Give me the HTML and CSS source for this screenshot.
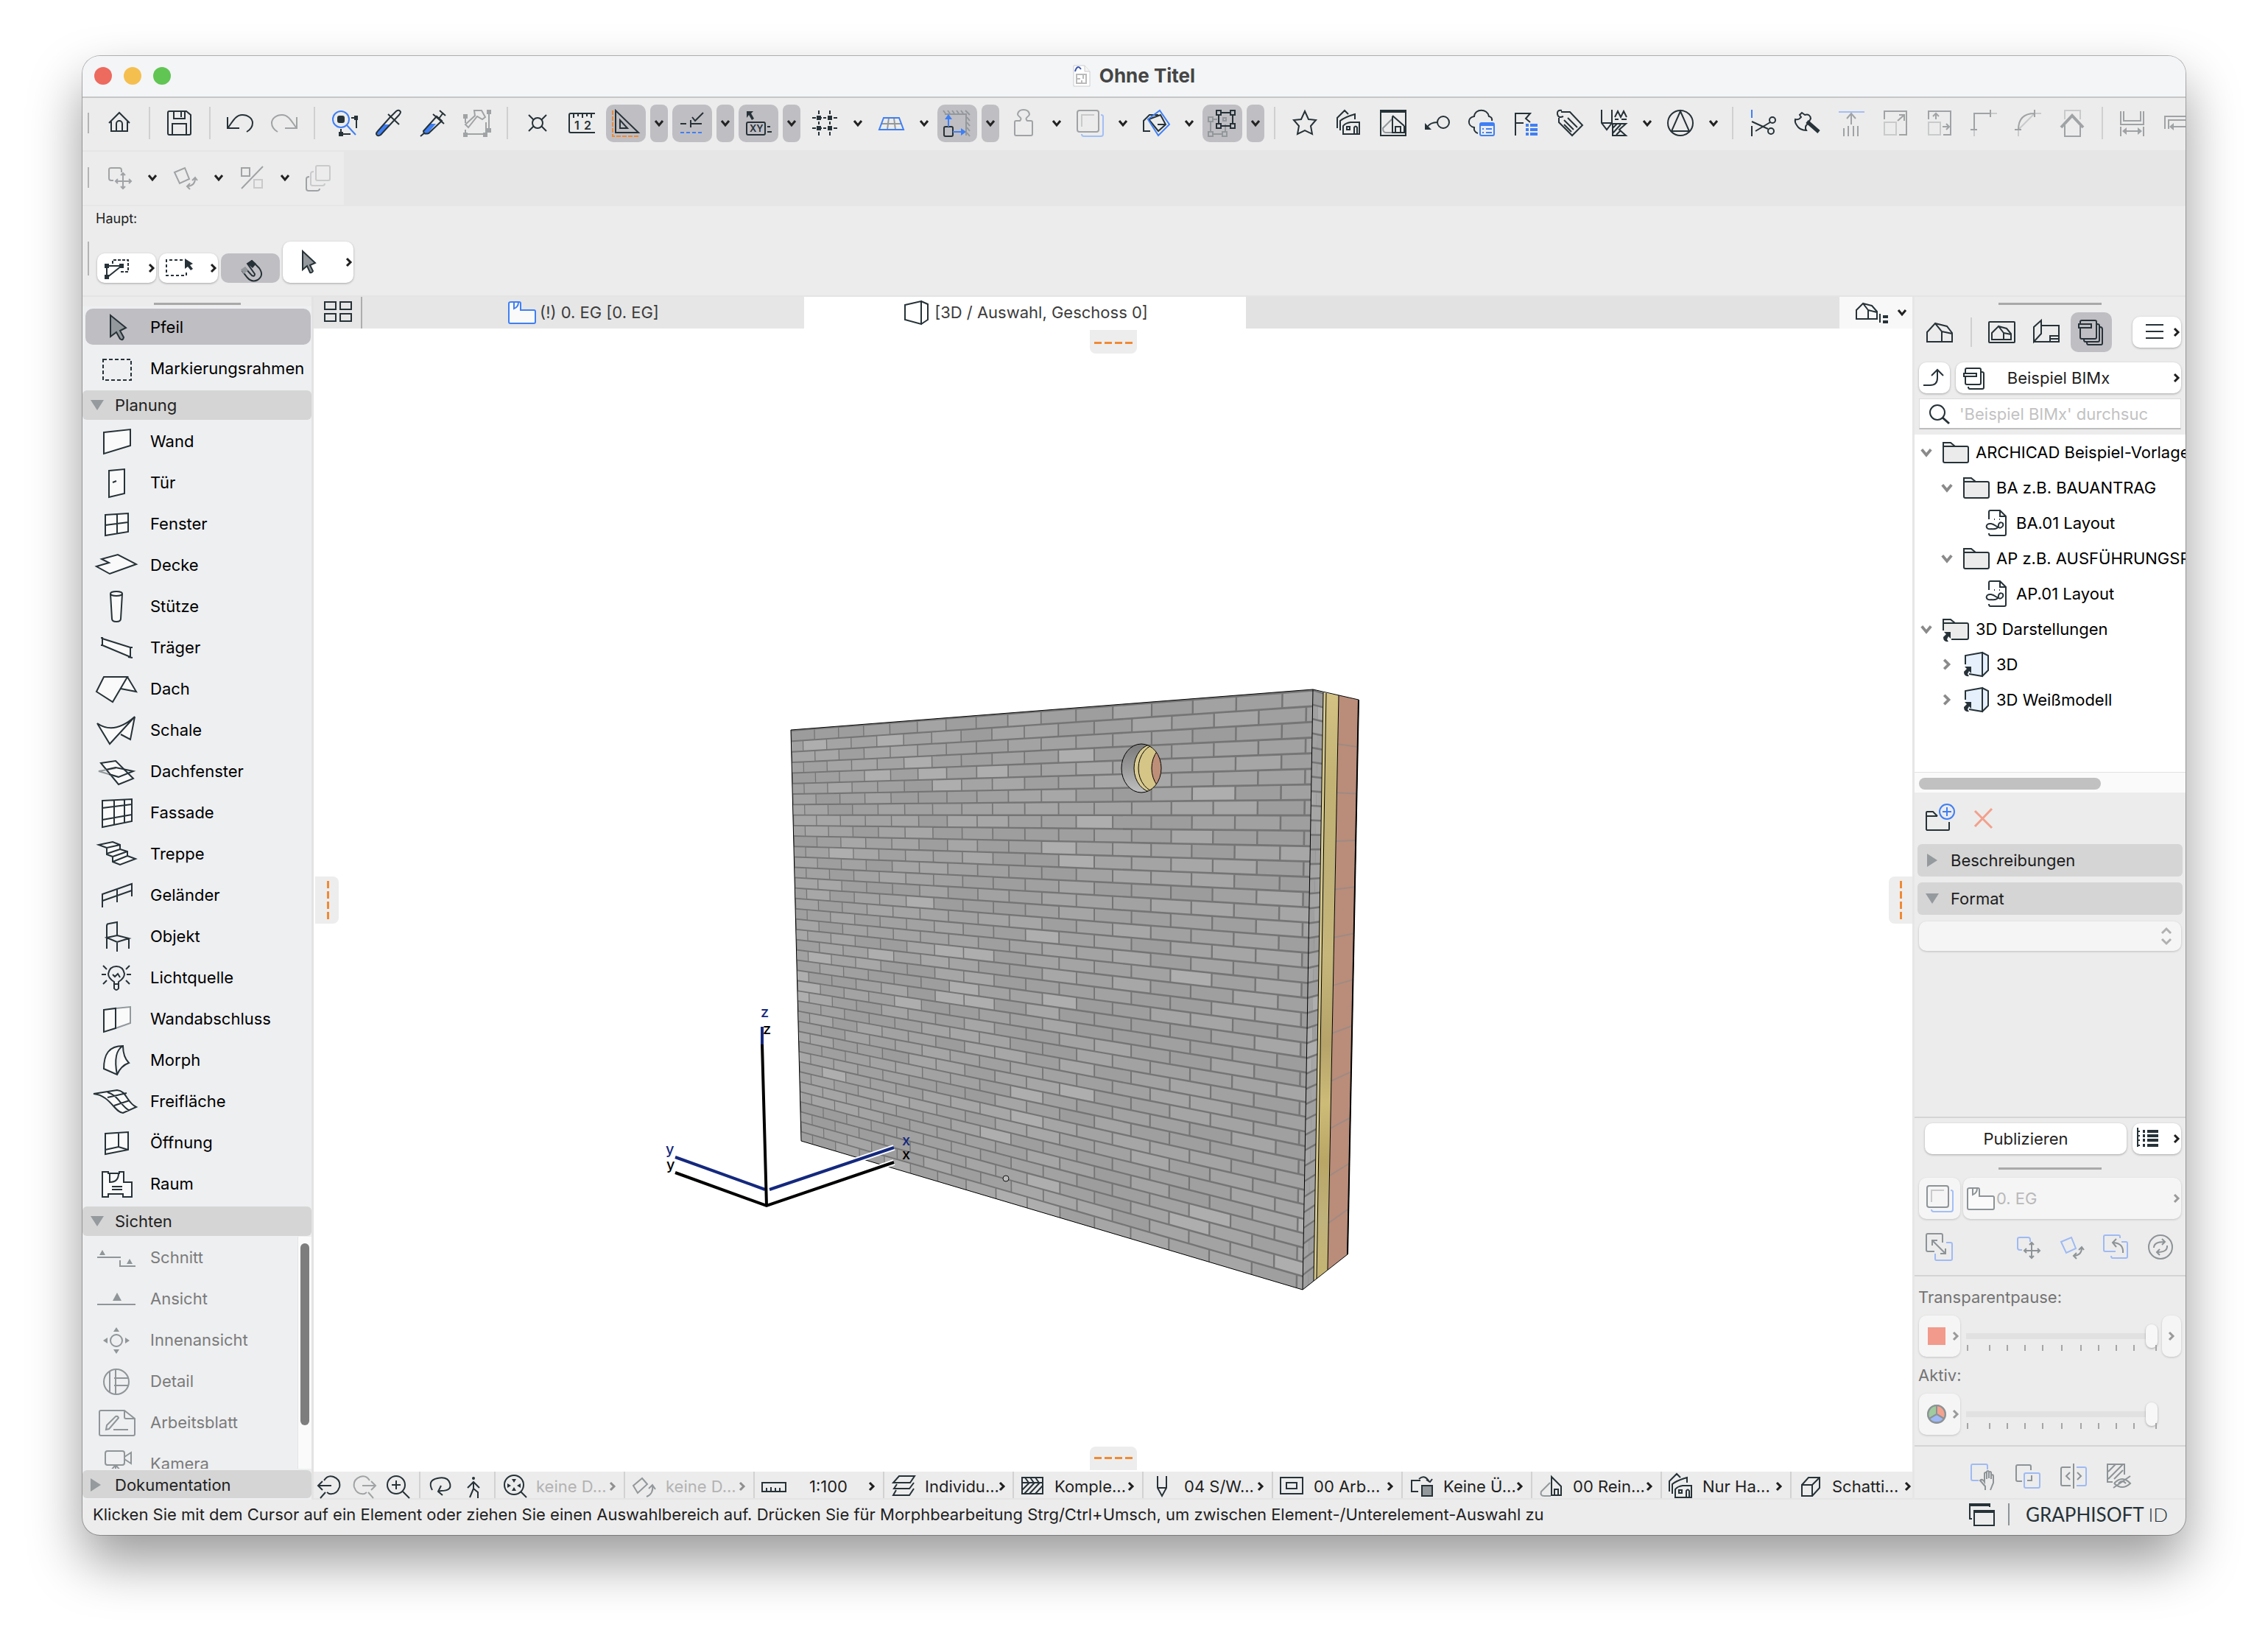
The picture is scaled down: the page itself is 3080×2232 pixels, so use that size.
FILE: index.html
```html
<!DOCTYPE html>
<html lang="de">
<head>
<meta charset="utf-8">
<title>Ohne Titel</title>
<link rel="stylesheet" href="styles.css">
</head>
<body>
<svg class="sprite" aria-hidden="true">
<defs>
<symbol id="down" viewBox="0 0 24 24"><path d="M7 9l5 6 5-6" stroke-width="3"/></symbol>
<symbol id="right" viewBox="0 0 24 24"><path d="M9 7l5 5-5 5" stroke-width="3"/></symbol>
<symbol id="home" viewBox="0 0 40 40"><path d="M6 20L20 6l14 14M9 18v13h22V18M16 31V21a4 4 0 0 1 8 0v10"/></symbol>
<symbol id="save" viewBox="0 0 40 40"><path d="M6 4h23l6 5v25q0 2-2 2H6q-2 0-2-2V6q0-2 2-2zM12 4v10h15V4M22 5v7M10 36V21h19v15"/></symbol>
<symbol id="undo" viewBox="0 0 40 40"><path d="M3 12v15h16M4 26C10 18 14 9 23 9c8 0 14 5 14 11 0 5-3 9-8 12"/></symbol>
<symbol id="redo" viewBox="0 0 40 40"><path d="M37 12v15H21M36 26C30 18 26 9 17 9 9 9 3 14 3 20c0 5 3 9 8 12"/></symbol>
<symbol id="find" viewBox="0 0 40 40"><circle cx="15" cy="15" r="11" class="b"/><path d="M23 23l12 13" class="b"/><rect x="10" y="10" width="10" height="10" rx="3" class="k"/><path d="M29 13h7v14M15 28v7h13"/><path d="M33 10h5v6h-5zM12 32h6v6h-6z" class="k"/></symbol>
<symbol id="pipette" viewBox="0 0 40 40"><path d="M7 29l7-7h8L9 37q-6 0-5-4z" class="kb"/><path d="M21 13l9-9q4-3 6 1 0 2-2 4L9 36q-4 3-6-1 0-2 2-4zM19 8l15 14"/></symbol>
<symbol id="syringe" viewBox="0 0 40 40"><path d="M9 28l6-7h9L13 34q-6 1-6-2z" class="kb"/><path d="M3 38l6-5M7 31l18-20 7 6-18 17q-7 2-7-3zM20 8l15 13M28 14l6-8M29 3l8 7"/></symbol>
<symbol id="inject" viewBox="0 0 40 40"><path d="M16 3h10l5 9-4 3-7-4L8 26l-4-4L17 10zM4 20v-9M36 6v24M32 35H6M4 29v8M32 35V19"/><path d="M1 8h6v6H1zM33 2h6v6h-6zM33 27h6v6h-6zM1 33h6v6H1zM28 33h6v6h-6z" class="k"/></symbol>
<symbol id="snap" viewBox="0 0 40 40"><circle cx="20" cy="20" r="7"/><path d="M8 9l7 7M32 9l-7 7M8 31l7-7M32 31l-7-7"/></symbol>
<symbol id="ruler" viewBox="0 0 40 40"><path d="M38 7H5q-2 0-2 2v22q0 2 2 2h33M9 7v6M15 7v4M21 7v6M27 7v4M33 7v6"/><text x="10" y="29" class="t t15">1</text><text x="23" y="29" class="t t15">2</text></symbol>
<symbol id="setsq" viewBox="0 0 40 40"><path d="M6 3v30h31zM12 16v11h10z"/><path d="M2 3v35h36" class="o" stroke-dasharray="6 2"/></symbol>
<symbol id="guide" viewBox="0 0 40 40"><path d="M4 21h8M19 21h14M18 16v10M20 12l4 5L35 6"/><path d="M4 33h30" class="b" stroke-dasharray="5 3"/></symbol>
<symbol id="xy" viewBox="0 0 40 40"><path d="M4 4h9l-3 3 4 7-3 2-4-7-3 4z" class="k"/><rect x="4" y="19" width="25" height="17" rx="2"/><text x="8" y="32" class="t t12">XY</text><path d="M32 25h4M32 32h6"/></symbol>
<symbol id="grid" viewBox="0 0 40 40"><path d="M12 3v34M27 3v34" stroke-dasharray="5 2 6 2 4 2 6 2 5"/><path d="M3 13h34M3 27h34" stroke-dasharray="5 2 6 2 4 2 6 2 5"/><path d="M9 10h6v6H9zM24 10h6v6h-6zM9 24h6v6H9zM24 24h6v6h-6z" class="k"/></symbol>
<symbol id="trap" viewBox="0 0 40 40"><path d="M7 21h27M17 13l-2 16M24 13l2 16" class="g"/><path d="M10 13h21l6 16H4z" class="b"/></symbol>
<symbol id="gravity" viewBox="0 0 40 40"><path d="M1 3l3 4M7 3l3 4M13 3l3 4M19 3l3 4M25 3l3 4M31 3l6 6M33 12l4 5M33 19l4 5M33 26l4 5M33 33l4 5M3 8h29v29" class="g"/><rect x="2" y="25" width="12" height="13" rx="2"/><path d="M8 25V12M14 32h12" class="b"/><path d="M3 15l5-7 5 7zM25 27l7 5-7 5z" class="kb"/></symbol>
<symbol id="person" viewBox="0 0 40 40"><path d="M15 17q3-3 0-5-3-2-3-4 1-6 8-6t8 6q0 2-3 4t0 5h5q2 0 2 2v16q0 2-2 2H10q-2 0-2-2V19q0-2 2-2z"/></symbol>
<symbol id="layers" viewBox="0 0 40 40"><rect x="3" y="3" width="29" height="29" rx="3"/><path d="M9 25V9h17" class="l"/><path d="M35 9q3 0 3 2v24q0 3-3 3H12q-3 0-3-3" class="lb"/></symbol>
<symbol id="cut" viewBox="0 0 40 40"><path d="M12 31H3V17l8-8h12M10 15l16-6 7 13-10 9zM22 22h10"/><path d="M25 3l13 19-15 15L9 15z" class="b"/></symbol>
<symbol id="group" viewBox="0 0 40 40"><path d="M4 18v14M7 35h13M24 31v-9M7 15h6" class="g"/><path d="M1 12h6v6H1zM1 32h6v6H1zM20 32h6v6h-6zM21 13h4v4h-4z" class="g"/><path d="M12 3h6v6h-6zM31 3h6v6h-6zM12 21h6v6h-6zM31 21h6v6h-6zM18 6h13M15 9v12M34 9v12M18 24h13"/></symbol>
<symbol id="star" viewBox="0 0 40 40"><path d="M20 4l5 11 10 1-7 8 2 11-10-5-10 5 2-11-7-8 10-1z"/></symbol>
<symbol id="houses" viewBox="0 0 40 40"><path d="M12 35V24q3-4 10-5h12v16zM17 25h4v4h-4zM27 35V26q2-3 4 0v9M8 30V17q6-5 20-9v7M4 27V13L14 3l5 5"/></symbol>
<symbol id="view" viewBox="0 0 40 40"><rect x="3" y="3" width="34" height="34"/><path d="M3 3h34v3H3z" class="k"/><path d="M19 14L6 27q0 6 4 6h9" class="g"/><path d="M19 10l16 14M19 11v22h16V24M23 33v-8h7v8"/></symbol>
<symbol id="mark" viewBox="0 0 40 40"><circle cx="28" cy="19" r="8"/><path d="M20 19q-10 0-14 7"/><path d="M3 20v9h9z" class="k"/></symbol>
<symbol id="cloud" viewBox="0 0 40 40"><path d="M15 34q-6-2-5-8C0 24 1 12 10 11c1-11 18-11 20 0q5 1 4 6"/><rect x="18" y="20" width="19" height="17" rx="2" class="b"/><path d="M18 20h19v4H18zM21 27h2v2h-2zM21 32h2v2h-2z" class="kb"/><path d="M26 28h8M26 33h8" class="b"/></symbol>
<symbol id="flag" viewBox="0 0 40 40"><path d="M6 37V7h20l-6 7 6 5M6 20h11"/><path d="M20 21h4v4h-4zM26 21h10v4H26zM20 27h4v4h-4zM26 27h10v4H26zM20 33h4v4h-4zM26 33h10v4H26z" class="kb"/></symbol>
<symbol id="tag" viewBox="0 0 40 40"><path d="M8 5h12l17 18-14 14L5 19v-6M9 3Q2 2 3 8t8 3M12 16l13 13M17 13l13 13M12 22l10 10"/></symbol>
<symbol id="pens" viewBox="0 0 40 40"><path d="M3 2v18l7 9 7-9V2M3 20h14M21 12l4-8 4 8 4-8 4 8M21 15h5M30 15h7M18 37V21h18l-9 8 9 8zM18 27l6-6M18 34l11-12M23 36l6-6"/></symbol>
<symbol id="acirc" viewBox="0 0 40 40"><circle cx="20" cy="20" r="17"/><path d="M20 4L8 31h24z"/></symbol>
<symbol id="scis" viewBox="0 0 40 40"><path d="M5 2v11" class="b"/><path d="M5 24v14M5 18l22 10M10 31l20-12"/><circle cx="33" cy="16" r="4"/><circle cx="31" cy="31" r="4"/></symbol>
<symbol id="axe" viewBox="0 0 40 40"><path d="M4 15q5 1 8-3l-2-3 3-3 4 3q7-2 8 5l-4 7q-5 4-2 9-9 0-13-7-3-4-2-8z"/><path d="M20 18l16 14" stroke-width="5"/></symbol>
<symbol id="toline" viewBox="0 0 40 40"><path d="M3 5h35" class="lb"/><path d="M20 22V7M14 14l6-7 6 7M10 27v11M16 24v14M23 24v14M29 24v14"/></symbol>
<symbol id="scale" viewBox="0 0 40 40"><path d="M5 19h16v17H5z" class="l"/><path d="M5 15V4h30v32H25M23 17l9-8M25 9h7v8"/></symbol>
<symbol id="stretch" viewBox="0 0 40 40"><path d="M5 19h16v17H5z" class="l"/><path d="M5 15V4h30v32H25M15 15V7M11 11l4-4 4 4M24 25h9M29 21l4 4-4 4"/></symbol>
<symbol id="corner" viewBox="0 0 40 40"><path d="M7 29v9M29 7h9" class="l"/><path d="M7 29V7h22M2 29h9M29 2v10"/></symbol>
<symbol id="arc" viewBox="0 0 40 40"><path d="M7 29v9M29 7h9M7 29L29 7" class="l"/><path d="M7 29C7 14 14 7 29 7M2 29h9M29 2v10"/></symbol>
<symbol id="housearrow" viewBox="0 0 40 40"><path d="M10 15V3h21v12" class="l"/><path d="M10 23v15h21V23"/><path d="M5 26l15-16 15 16" stroke-width="4"/></symbol>
<symbol id="dim" viewBox="0 0 40 40"><path d="M4 4v18h31V4M8 4v13h23V4M4 25v13M35 25v13M7 31h25"/><path d="M6 31l6-5v10zM33 31l-6-5v10z" class="k"/></symbol>
<symbol id="dim2" viewBox="0 0 40 40"><path d="M4 28V11h34M9 28V16h29M13 25h26"/><path d="M10 25l6-5v10z" class="k"/></symbol>
<symbol id="move" viewBox="0 0 40 40"><path d="M12 24H9q-3 0-3-3V9q0-2 3-2h11q3 0 3 3v3" class="ref-stroke"/><path d="M25 14v21M15 25h21M22 17l3-3 3 3M22 32l3 3 3-3M18 22l-3 3 3 3M33 22l3 3-3 3"/></symbol>
<symbol id="rotate" viewBox="0 0 40 40"><path d="M5 13l14-6 6 15-13 6z" class="ref-stroke"/><path d="M33 21q0 10-10 11M29 24l4-4 3 4M26 28l-4 4 4 4"/></symbol>
<symbol id="percent" viewBox="0 0 40 40"><path d="M6 7h11v11H6zM35 5L6 35"/><path d="M23 23h11v11H23z" class="l"/></symbol>
<symbol id="copies" viewBox="0 0 40 40"><rect x="17" y="4" width="19" height="20" rx="2" class="l"/><path d="M14 12q-4 0-4 3v14q0 2 3 2h13q3 0 3-3" class="l"/><path d="M8 19q-4 0-4 3v13q0 3 3 3h11q4 0 4-3"/></symbol>
<symbol id="quick" viewBox="0 0 40 40"><path d="M14 14V9h21v16H24" stroke-dasharray="4 2"/><path d="M6 34V17h20L6 33"/><path d="M3 14h6v6H3zM3 29h6v6H3zM23 14h6v6h-6z" class="k"/></symbol>
<symbol id="marq" viewBox="0 0 40 40"><path d="M25 9H3v21h27v-7" stroke-dasharray="4 3"/><path d="M28 7v14l4-3 4 5 3-2-4-5 4-2z" class="k"/></symbol>
<symbol id="magnet" viewBox="0 0 40 40"><path d="M22 10l10 10q7 10-2 16-8 4-14-3l-7-9 4-4 9 10q4 2 4-2L16 14z"/><path d="M22 9l6 5-5 6-7-6z" class="k"/><path d="M13 18l-6 4 4 6 6-5z" class="kg"/></symbol>
<symbol id="cursor" viewBox="0 0 40 40"><path d="M12 5v25l6-5 4 9q3 1 4-2l-4-8 7-3z" class="kgs"/></symbol>
<symbol id="four" viewBox="0 0 40 40"><path d="M2 6h15v10H2zM23 6h15v10H23zM2 22h15v10H2zM23 22h15v10H23z"/></symbol>
<symbol id="plan" viewBox="0 0 40 40"><path d="M5 6h11q2 0 2 2v9h18q2 0 2 2v14q0 2-2 2H4q-2 0-2-2V8q0-2 3-2z" class="w"/><path d="M9 6v9q6-2 6-9"/></symbol>
<symbol id="box" viewBox="0 0 40 40"><path d="M4 10L26 5v31L4 30zM26 5l9 4v21l-9 6"/></symbol>
<symbol id="housetree" viewBox="0 0 40 40"><path d="M3 17L12 8l7 9v12H3zM12 8l12 3 7 8v10H19M19 17l12 3M35 22v12"/><path d="M39 24h7v4h-7zM39 31h7v4h-7z" class="k"/></symbol>
<symbol id="house" viewBox="0 0 40 40"><path d="M3 20L14 8l9 11v14H3zM14 8l16 4 7 9v12H23M23 19l14 3"/></symbol>
<symbol id="hframe" viewBox="0 0 40 40"><rect x="3" y="6" width="35" height="28" rx="1"/><path d="M7 21l9-9 7 9v9H7zM16 12l11 3 6 7v8H23M23 21l10 2"/></symbol>
<symbol id="sheet" viewBox="0 0 40 40"><path d="M3 33V13L13 4v18zM3 33h34V11H13M25 33v-8h12M25 29h12"/></symbol>
<symbol id="stack" viewBox="0 0 40 40"><rect x="5" y="4" width="22" height="25" rx="2"/><path d="M28 9q3 0 3 2v20q0 2-2 2H12q-2 0-2-3M32 13q3 0 3 3v19q0 2-2 2H16q-2 0-2-3"/><rect x="3" y="9" width="17" height="5" class="slot"/></symbol>
<symbol id="stack2" viewBox="0 0 40 40"><rect x="6" y="7" width="21" height="22" rx="2"/><path d="M28 12q3 0 3 2v19q0 2-2 2H12q-2 0-2-3"/><rect x="4" y="14" width="17" height="4" class="slotw"/></symbol>
<symbol id="menu" viewBox="0 0 40 40"><path d="M8 10h24M8 19h24M8 28h24"/></symbol>
<symbol id="up" viewBox="0 0 40 40"><path d="M6 30h9q10 0 10-10V9M17 17l8-8 8 8"/></symbol>
<symbol id="lens" viewBox="0 0 40 40"><circle cx="17" cy="18" r="10"/><path d="M24 25l9 8" stroke-width="3"/></symbol>
<symbol id="folder" viewBox="0 0 40 40"><path d="M3 7h10l6 5h16q2 0 2 2v18q0 2-2 2H5q-2 0-2-2V9z" class="f"/><path d="M3 12h16"/></symbol>
<symbol id="pdf" viewBox="0 0 40 40"><path d="M10 15V5q0-2 2-2h13l8 8v24q0 2-2 2H12q-2 0-2-3M25 4v7h7M17 15h1M24 15h1M13 28C5 30 4 20 13 21c7 1 11 10 16 3 2-6-6-6-6-1 0 4-4 6-10 5"/></symbol>
<symbol id="flink" viewBox="0 0 40 40"><path d="M3 22V7h10l6 5h16q2 0 2 2v18q0 2-2 2H14" class="f"/><path d="M3 12h16"/><path d="M4 24h9v9l-3-3-2 4 2 3q-7 1-7-6l4-4z" class="k"/></symbol>
<symbol id="blink" viewBox="0 0 40 40"><path d="M5 20V8l23-4v32l-18-3M28 4l8 4v20l-8 8" class="fb"/><path d="M4 23h9v9l-3-3-2 4 2 3q-7 1-7-6l4-4z" class="k"/></symbol>
<symbol id="fplus" viewBox="0 0 44 40"><path d="M18 17H3M3 36h30q1 0 1-1V25M18 17l-6-6H4q-1 0-1 2v22l1 1"/><circle cx="31" cy="11" r="10" class="b"/><path d="M25 11h12M31 5v12" class="b"/></symbol>
<symbol id="del" viewBox="0 0 40 40"><path d="M9 10l23 23M32 7L9 31" stroke-width="3"/></symbol>
<symbol id="list" viewBox="0 0 40 40"><path d="M5 5v26M5 10h3M5 16h3M5 22h3M5 29h3"/><path d="M12 10h3M12 16h3M12 22h3M12 29h3M18 10h15M18 16h15M18 22h15M18 29h15" stroke-width="4"/></symbol>
<symbol id="expand" viewBox="0 0 40 40"><path d="M30 14h6q2 0 2 2v20q0 2-2 2H17q-2 0-2-2v-7" class="ref-stroke"/><path d="M14 26H5q-2 0-2-2V4q0-2 2-2h18q2 0 2 2v10M11 11l18 18M11 18v-7h7M29 22v7h-7"/></symbol>
<symbol id="back" viewBox="0 0 40 40"><path d="M19 26H5q-2 0-2-2V6q0-2 2-2h18q2 0 2 2v2M27 13h6q2 0 2 2v18q0 2-2 2H15q-2 0-2-3" class="ref-stroke"/><path d="M29 28q1-13-13-14M20 9l-5 5 5 6"/></symbol>
<symbol id="cycle" viewBox="0 0 40 40"><circle cx="20" cy="20" r="16"/><path d="M11 21q0-8 14-8M22 9l4 4-4 4M29 18q1 9-13 9M19 23l-4 4 4 4"/></symbol>
<symbol id="hand" viewBox="0 0 40 40"><path d="M13 26H5q-2 0-2-2V6q0-2 2-2h18q2 0 2 2v5" class="ref-stroke"/><path d="M22 39v-5l-7-8q3-3 6 2V16q2-2 3 0v8-10q2-2 3 0v9-8q2-2 3 0v9-5q3-2 3 1v9l-4 10"/></symbol>
<symbol id="over" viewBox="0 0 40 40"><path d="M11 27H5q-2 0-2-2V7q0-2 2-2h16q2 0 2 2v5M24 19v7h-6"/><rect x="14" y="16" width="21" height="20" rx="2" class="ref-stroke"/></symbol>
<symbol id="splitv" viewBox="0 0 40 40"><path d="M16 8H5q-2 0-2 2v21q0 2 2 2h11M20 3v34M15 15l-5 5 5 5M25 15l5 5-5 5"/><path d="M24 8h11q2 0 2 2v21q0 2-2 2H24" class="ref-stroke"/></symbol>
<symbol id="hatch" viewBox="0 0 40 40"><path d="M12 28H5V4h23v14M6 14L16 4M6 24L26 4M14 24l12-12M13 36L36 20M14 30q11-12 22 0-11 10-22 0M20 30q5-6 10 0"/></symbol>
<symbol id="zback" viewBox="0 0 40 40"><path d="M12 12Q17 4 25 7q10 4 8 14-4 11-14 9l-3-2M4 19h18M10 13l-6 6 6 6M14 28l-7 8"/></symbol>
<symbol id="zfwd" viewBox="0 0 40 40"><path d="M28 12Q23 4 15 7 5 11 7 21q4 11 14 9l3-2M36 19H18M30 13l6 6-6 6M26 28l7 8"/></symbol>
<symbol id="zin" viewBox="0 0 40 40"><circle cx="18" cy="18" r="12"/><path d="M27 27l9 9M18 12v12M12 18h12"/></symbol>
<symbol id="orbit" viewBox="0 0 40 40"><path d="M8 25Q1 12 15 9t17 7-12 10l-4 1M20 19l-4 8 6 5"/></symbol>
<symbol id="walk" viewBox="0 0 40 40"><circle cx="18" cy="9" r="2" class="k"/><path d="M18 14v9l6 5v8M18 23l-5 12M10 22l8-8 8 8"/></symbol>
<symbol id="fit" viewBox="0 0 40 40"><circle cx="19" cy="18" r="13"/><path d="M28 27l8 8"/><path d="M16 10h6l-3 5zM16 26h6l-3-5zM10 16v6l5-3zM28 16v6l-5-3z" class="k"/></symbol>
<symbol id="rot2" viewBox="0 0 40 40"><path d="M5 19l12-10 7 8-13 12zM31 18q2 12-8 16M26 23l5-5 4 6"/></symbol>
<symbol id="rule2" viewBox="0 0 40 40"><path d="M4 15h32v12H4zM10 27v-5M16 27v-6M22 27v-5M28 27v-5"/></symbol>
<symbol id="lay" viewBox="0 0 40 40"><path d="M14 6h21l-6 9H6zM11 17l-4 6h21l6-8M10 25l-4 7h22l6-9"/></symbol>
<symbol id="pattern" viewBox="0 0 40 40"><path d="M5 8h28v22H5zM5 15h28M9 8l5 7M16 8l5 7M23 8l5 7M5 25l10-10M8 30l14-15M15 30l14-15M23 30l10-11"/></symbol>
<symbol id="pen" viewBox="0 0 40 40"><path d="M13 6v16l6 11 6-11V6M13 22h12"/></symbol>
<symbol id="frame" viewBox="0 0 40 40"><path d="M4 8h30v22H4zM12 15h14v8H12z"/></symbol>
<symbol id="swap" viewBox="0 0 40 40"><path d="M18 12H6v15h9M16 10q8-7 14 4M34 10l-3 4-5-3"/><path d="M20 19h14v14H20z" class="kgs"/></symbol>
<symbol id="reno" viewBox="0 0 40 40"><path d="M18 15L6 27q-2 6 4 6h9" class="g"/><path d="M20 7v25h13V20zM24 32v-8h5v8"/></symbol>
<symbol id="cube" viewBox="0 0 40 40"><path d="M8 18h14v15H8zM8 18l9-10h15v14L22 33M22 18L32 8"/></symbol>
<symbol id="wins" viewBox="0 0 40 40"><path d="M7 26H4V6h27v4"/><path d="M4 6h27v3H4zM10 15h27v3H10z" class="k"/><path d="M10 15h27v20H10z"/></symbol>
<symbol id="p-cursor" viewBox="0 0 60 40"><path d="M22 4v29l8-6 5 9q4 3 5-2l-5-9 8-4z" class="kgs"/></symbol>
<symbol id="p-marq" viewBox="0 0 60 40"><path d="M12 8h38v28H12z" stroke-dasharray="5 3"/></symbol>
<symbol id="p-wand" viewBox="0 0 60 40"><path d="M13 8l36-4v22L13 37z" class="w"/></symbol>
<symbol id="p-tuer" viewBox="0 0 60 40"><path d="M20 4l21-2v33l-21 5zM25 20l5-2" class="w"/></symbol>
<symbol id="p-fenster" viewBox="0 0 60 40"><path d="M15 8l31-2v25l-31 5zM31 7v26M15 22l31-4" class="w"/></symbol>
<symbol id="p-decke" viewBox="0 0 60 40"><path d="M3 22l17-5-10-5 22-6 25 13-36 13z" class="w"/></symbol>
<symbol id="p-stuetze" viewBox="0 0 60 40"><path d="M22 3l2 34q0 4 6 4t6-4l2-34" class="w"/><ellipse cx="30" cy="3" rx="8" ry="3" class="w"/></symbol>
<symbol id="p-traeger" viewBox="0 0 60 40"><path d="M11 8l38 12v13L11 17zM9 7h3M9 17h3M46 33l6 1M48 20h4" class="w"/></symbol>
<symbol id="p-dach" viewBox="0 0 60 40"><path d="M45 4l12 20-21-4" class="w"/><path d="M13 4h32L25 38 3 24z" class="w"/></symbol>
<symbol id="p-schale" viewBox="0 0 60 40"><path d="M55 2l-6 31-13-7" class="w"/><path d="M4 11q23 16 51-9L21 39z" class="w"/></symbol>
<symbol id="p-dachf" viewBox="0 0 60 40"><path d="M9 9l20-3 24 24-20 8z" class="w"/><path d="M29 16L6 20l27 8" class="g"/><path d="M16 18l13-3 24 5-20 8-13-4"/></symbol>
<symbol id="p-fassade" viewBox="0 0 60 40"><path d="M11 4l40-2v30l-40 8zM27 3v34M41 2v32M11 14l40-5M11 30l40-7" class="w"/></symbol>
<symbol id="p-treppe" viewBox="0 0 60 40"><path d="M6 8l19-4 10 4v6l10 3v6l11 4-21 8-10-4v-7l-8-3v-9zM17 12l18-4M17 20l18-6M25 24l20-7M25 31l20-8" class="w"/></symbol>
<symbol id="p-gel" viewBox="0 0 60 40"><path d="M11 37V19L51 5v17M11 28l40-14M31 12v18"/></symbol>
<symbol id="p-objekt" viewBox="0 0 60 40"><path d="M17 37V6q0-3 3-3l11-2v18l16 4v14M31 28v13M17 22l14-3 16 4-16 5z"/></symbol>
<symbol id="p-licht" viewBox="0 0 60 40"><path d="M27 29v-3q-8-5-8-11 2-10 11-10t11 10q0 6-8 11v3M27 29h6v6q-3 4-6 0zM25 16l3 3 4-4 3 5M10 16h6M44 16h6M12 4l5 5M48 4l-5 5M12 29l5-5M48 29l-5-5"/></symbol>
<symbol id="p-wab" viewBox="0 0 60 40"><path d="M29 6l20-2v22l-20 7" class="wg"/><path d="M13 8l16-2v27l-16 5z" class="w"/></symbol>
<symbol id="p-morph" viewBox="0 0 60 40"><path d="M13 32C13 12 20 1 39 1q0 15 8 23-11 4-16 16zM39 1Q25 9 31 40" class="w"/></symbol>
<symbol id="p-frei" viewBox="0 0 60 40"><path d="M-1 10l32-5c13 1 13 17 26 23l-18 8C28 36 22 12-1 10zM18 15l26-6M27 26l21-7M18 8c15 4 18 19 30 25" class="w"/></symbol>
<symbol id="p-oeff" viewBox="0 0 60 40"><path d="M15 8l31-2v24l-31 6zM33 7v19M15 30l18-4 13 4" class="w"/></symbol>
<symbol id="p-raum" viewBox="0 0 60 40"><path d="M11 4h8v2h15V4h6v14h11v20H39v-4H19v4h-8z" class="w"/><path d="M21 6v12q12 0 12-12M24 24h14M24 28h14"/></symbol>
<symbol id="p-schnitt" viewBox="0 0 60 40"><path d="M4 20h32M35 24v8M34 32h22"/><path d="M11 10l4 7H7zM48 22l4 7h-8z" class="k"/></symbol>
<symbol id="p-ansicht" viewBox="0 0 60 40"><path d="M4 28h52"/><path d="M31 12l6 11H25z" class="k"/></symbol>
<symbol id="p-innen" viewBox="0 0 60 40"><circle cx="30" cy="21" r="8"/><path d="M30 3l4 6h-8zM30 39l4-6h-8zM12 21l6-4v8zM48 21l-6-4v8z" class="k"/></symbol>
<symbol id="p-detail" viewBox="0 0 60 40"><circle cx="30" cy="21" r="17"/><path d="M21 7v28M29 4v34M27 16h20M27 26h20"/></symbol>
<symbol id="p-blatt" viewBox="0 0 60 40"><path d="M9 4h32l14 11v21q0 2-2 2H9q-2 0-2-2V6q0-2 2-2zM41 4v9q0 2 2 2h12M16 30l1-6 12-12q3-1 4 2L20 29zM26 30h20"/></symbol>
<symbol id="p-kamera" viewBox="0 0 60 40"><rect x="15" y="3" width="26" height="19" rx="3"/><path d="M41 11l9-6v15l-9-6M29 22v6M29 22l-7 8M29 22l7 8"/></symbol>
</defs>
</svg>

<div class="window">
<header class="titlebar">
  <div class="lights"><button class="red" aria-label="Schließen"></button><button class="yellow" aria-label="Minimieren"></button><button class="green" aria-label="Zoomen"></button></div>
  <h1><svg class="doc" viewBox="0 0 24 30" aria-hidden="true"><path d="M1 1h15l7 8v20H1z" fill="#fff" stroke="#ccc"/><path d="M16 1v8h7" fill="#f4f4f4" stroke="#ccc"/><path d="M3 9q3-10 8-3" fill="none" stroke="#3a55b0" stroke-width="2"/><path d="M5 13h13v12H5zM5 19h5M14 13v6M12 25v-4" fill="none" stroke="#bbb" stroke-width="2"/></svg>Ohne Titel</h1>
</header>

<div class="toolbar">
  <i class="grip"></i>
  <button class="c" aria-label="Start"><svg class="i"><use href="#home"/></svg></button>
  <i class="sep"></i>
  <button class="c" aria-label="Sichern"><svg class="i"><use href="#save"/></svg></button>
  <i class="sep"></i>
  <button class="c" aria-label="Widerrufen"><svg class="i"><use href="#undo"/></svg></button>
  <button class="c off" aria-label="Wiederholen"><svg class="i"><use href="#redo"/></svg></button>
  <i class="sep"></i>
  <button class="c" aria-label="Suchen"><svg class="i"><use href="#find"/></svg></button>
  <button class="c" aria-label="Aufnehmen"><svg class="i"><use href="#pipette"/></svg></button>
  <button class="c" aria-label="Übertragen"><svg class="i"><use href="#syringe"/></svg></button>
  <button class="c off" aria-label="Einstellungen übertragen"><svg class="i"><use href="#inject"/></svg></button>
  <i class="sep"></i>
  <button class="c" aria-label="Fangpunkt"><svg class="i"><use href="#snap"/></svg></button>
  <button class="c" aria-label="Messen"><svg class="i"><use href="#ruler"/></svg></button>
  <button class="c on" aria-label="Hilfslinien"><svg class="i"><use href="#setsq"/></svg></button><button class="d on" aria-label="Mehr"><svg class="v"><use href="#down"/></svg></button>
  <button class="c on" aria-label="Fanghilfe"><svg class="i"><use href="#guide"/></svg></button><button class="d on" aria-label="Mehr"><svg class="v"><use href="#down"/></svg></button>
  <button class="c on" aria-label="Tracker"><svg class="i"><use href="#xy"/></svg></button><button class="d on" aria-label="Mehr"><svg class="v"><use href="#down"/></svg></button>
  <button class="c" aria-label="Raster"><svg class="i"><use href="#grid"/></svg></button><button class="d" aria-label="Mehr"><svg class="v"><use href="#down"/></svg></button>
  <button class="c" aria-label="Ebene"><svg class="i"><use href="#trap"/></svg></button><button class="d" aria-label="Mehr"><svg class="v"><use href="#down"/></svg></button>
  <button class="c on" aria-label="Gravitation"><svg class="i"><use href="#gravity"/></svg></button><button class="d on" aria-label="Mehr"><svg class="v"><use href="#down"/></svg></button>
  <button class="c off" aria-label="Figur"><svg class="i"><use href="#person"/></svg></button><button class="d" aria-label="Mehr"><svg class="v"><use href="#down"/></svg></button>
  <button class="c off" aria-label="Transparentpause"><svg class="i"><use href="#layers"/></svg></button><button class="d" aria-label="Mehr"><svg class="v"><use href="#down"/></svg></button>
  <button class="c" aria-label="Schnittebene"><svg class="i"><use href="#cut"/></svg></button><button class="d" aria-label="Mehr"><svg class="v"><use href="#down"/></svg></button>
  <button class="c on" aria-label="Gruppe"><svg class="i"><use href="#group"/></svg></button><button class="d on" aria-label="Mehr"><svg class="v"><use href="#down"/></svg></button>
  <i class="sep"></i>
  <button class="c" aria-label="Favoriten"><svg class="i"><use href="#star"/></svg></button>
  <button class="c" aria-label="Überschreibung"><svg class="i"><use href="#houses"/></svg></button>
  <button class="c" aria-label="Umbau"><svg class="i"><use href="#view"/></svg></button>
  <button class="c" aria-label="Markierung"><svg class="i"><use href="#mark"/></svg></button>
  <button class="c" aria-label="Revision"><svg class="i"><use href="#cloud"/></svg></button>
  <button class="c" aria-label="Issues"><svg class="i"><use href="#flag"/></svg></button>
  <button class="c" aria-label="Etikett"><svg class="i"><use href="#tag"/></svg></button>
  <button class="c" aria-label="Attribute"><svg class="i"><use href="#pens"/></svg></button><button class="d" aria-label="Mehr"><svg class="v"><use href="#down"/></svg></button>
  <button class="c" aria-label="Analyse"><svg class="i"><use href="#acirc"/></svg></button><button class="d" aria-label="Mehr"><svg class="v"><use href="#down"/></svg></button>
  <i class="sep"></i>
  <button class="c" aria-label="Trennen"><svg class="i"><use href="#scis"/></svg></button>
  <button class="c" aria-label="Spalten"><svg class="i"><use href="#axe"/></svg></button>
  <button class="c off" aria-label="Angleichen"><svg class="i"><use href="#toline"/></svg></button>
  <button class="c off" aria-label="Skalieren"><svg class="i"><use href="#scale"/></svg></button>
  <button class="c off" aria-label="Strecken"><svg class="i"><use href="#stretch"/></svg></button>
  <button class="c off" aria-label="Verbinden"><svg class="i"><use href="#corner"/></svg></button>
  <button class="c off" aria-label="Ausrunden"><svg class="i"><use href="#arc"/></svg></button>
  <button class="c off" aria-label="Dach"><svg class="i"><use href="#housearrow"/></svg></button>
  <i class="sep"></i>
  <button class="c off" aria-label="Bemaßung"><svg class="i"><use href="#dim"/></svg></button>
  <button class="c off" aria-label="Bemaßung außen"><svg class="i"><use href="#dim2"/></svg></button>
</div>

<div class="band"><div class="toolbar second">
  <i class="grip"></i>
  <button class="c off" aria-label="Verschieben"><svg class="i"><use href="#move"/></svg></button><button class="d" aria-label="Mehr"><svg class="v"><use href="#down"/></svg></button>
  <button class="c off" aria-label="Drehen"><svg class="i"><use href="#rotate"/></svg></button><button class="d" aria-label="Mehr"><svg class="v"><use href="#down"/></svg></button>
  <button class="c off" aria-label="Größe"><svg class="i"><use href="#percent"/></svg></button><button class="d" aria-label="Mehr"><svg class="v"><use href="#down"/></svg></button>
  <button class="c off" aria-label="Vervielfachen"><svg class="i"><use href="#copies"/></svg></button>
</div></div>

<div class="info">
  <p>Haupt:</p>
  <div class="inforow">
    <i class="grip tall"></i>
    <button class="pill" aria-label="Schnellauswahl"><svg class="i"><use href="#quick"/></svg><svg class="v"><use href="#right"/></svg></button>
    <button class="pill" aria-label="Auswahlmethode"><svg class="i"><use href="#marq"/></svg><svg class="v"><use href="#right"/></svg></button>
    <button class="pill pressed" aria-label="Magnet"><svg class="i"><use href="#magnet"/></svg></button>
    <button class="pill big" aria-label="Pfeil"><svg class="i"><use href="#cursor"/></svg><svg class="v"><use href="#right"/></svg></button>
  </div>
</div>

<div class="main">
<nav class="palette">
  <i class="handle"></i>
  <ul>
    <li><button class="tool sel"><svg class="p"><use href="#p-cursor"/></svg>Pfeil</button></li>
    <li><button class="tool"><svg class="p"><use href="#p-marq"/></svg>Markierungsrahmen</button></li>
  </ul>
  <button class="head"><i class="tri"></i>Planung</button>
  <ul>
    <li><button class="tool"><svg class="p"><use href="#p-wand"/></svg>Wand</button></li>
    <li><button class="tool"><svg class="p"><use href="#p-tuer"/></svg>Tür</button></li>
    <li><button class="tool"><svg class="p"><use href="#p-fenster"/></svg>Fenster</button></li>
    <li><button class="tool"><svg class="p"><use href="#p-decke"/></svg>Decke</button></li>
    <li><button class="tool"><svg class="p"><use href="#p-stuetze"/></svg>Stütze</button></li>
    <li><button class="tool"><svg class="p"><use href="#p-traeger"/></svg>Träger</button></li>
    <li><button class="tool"><svg class="p"><use href="#p-dach"/></svg>Dach</button></li>
    <li><button class="tool"><svg class="p"><use href="#p-schale"/></svg>Schale</button></li>
    <li><button class="tool"><svg class="p"><use href="#p-dachf"/></svg>Dachfenster</button></li>
    <li><button class="tool"><svg class="p"><use href="#p-fassade"/></svg>Fassade</button></li>
    <li><button class="tool"><svg class="p"><use href="#p-treppe"/></svg>Treppe</button></li>
    <li><button class="tool"><svg class="p"><use href="#p-gel"/></svg>Geländer</button></li>
    <li><button class="tool"><svg class="p"><use href="#p-objekt"/></svg>Objekt</button></li>
    <li><button class="tool"><svg class="p"><use href="#p-licht"/></svg>Lichtquelle</button></li>
    <li><button class="tool"><svg class="p"><use href="#p-wab"/></svg>Wandabschluss</button></li>
    <li><button class="tool"><svg class="p"><use href="#p-morph"/></svg>Morph</button></li>
    <li><button class="tool"><svg class="p"><use href="#p-frei"/></svg>Freifläche</button></li>
    <li><button class="tool"><svg class="p"><use href="#p-oeff"/></svg>Öffnung</button></li>
    <li><button class="tool"><svg class="p"><use href="#p-raum"/></svg>Raum</button></li>
  </ul>
  <button class="head lower"><i class="tri"></i>Sichten</button>
  <div class="views">
    <ul>
      <li><button class="tool dim"><svg class="p"><use href="#p-schnitt"/></svg>Schnitt</button></li>
      <li><button class="tool dim"><svg class="p"><use href="#p-ansicht"/></svg>Ansicht</button></li>
      <li><button class="tool dim"><svg class="p"><use href="#p-innen"/></svg>Innenansicht</button></li>
      <li><button class="tool dim"><svg class="p"><use href="#p-detail"/></svg>Detail</button></li>
      <li><button class="tool dim"><svg class="p"><use href="#p-blatt"/></svg>Arbeitsblatt</button></li>
      <li><button class="tool dim"><svg class="p"><use href="#p-kamera"/></svg>Kamera</button></li>
    </ul>
    <div class="vbar"><i></i></div>
  </div>
  <button class="head last"><i class="tri side-tri"></i>Dokumentation</button>
</nav>

<section class="center">
  <div class="tabs">
    <button class="tabgrid" aria-label="Tabübersicht"><svg class="i"><use href="#four"/></svg></button>
    <button class="tab"><svg class="i blue"><use href="#plan"/></svg>(!) 0. EG [0. EG]</button>
    <button class="tab active"><svg class="i"><use href="#box"/></svg>[3D / Auswahl, Geschoss 0]</button>
    <div class="tabfill"></div>
    <button class="tabmenu" aria-label="Ansichtsnavigation"><svg class="i"><use href="#housetree"/></svg><svg class="v"><use href="#down"/></svg></button>
  </div>
  <div class="canvas">
    <svg id="scene" viewBox="426 446 2171 1552" role="img" aria-label="3D-Ansicht einer Wand">
      <defs>
        <linearGradient id="yel" x1="0" y1="0" x2="0" y2="1"><stop offset="0" stop-color="#d3c283"/><stop offset=".15" stop-color="#c2b273"/><stop offset=".3" stop-color="#bfb078"/><stop offset=".45" stop-color="#c6b67a"/><stop offset=".6" stop-color="#b5a36a"/><stop offset=".7" stop-color="#cdbb78"/><stop offset=".8" stop-color="#b9a666"/><stop offset=".9" stop-color="#c0b27c"/><stop offset="1" stop-color="#c5b472"/></linearGradient>
        <clipPath id="hole"><ellipse cx="1550" cy="1043" rx="27" ry="33"/></clipPath>
        <linearGradient id="tube" x1="0" y1="0" x2="0" y2="1"><stop offset="0" stop-color="#777"/><stop offset=".5" stop-color="#999"/><stop offset="1" stop-color="#c4c4c4"/></linearGradient>
      </defs>
      <polygon points="1074,991 1783,936 1769,1751 1088,1549" fill="#757575"/>
      <g id="front"></g>
      <polygon points="1783,936 1797,940 1784,1739 1769,1751" fill="#757575"/>
      <g id="edge"></g>
      <polygon points="1797,940 1801,941 1788,1736 1784,1739" fill="#d6c98f"/>
      <polygon points="1801,941 1818,944 1803,1724 1788,1736" fill="url(#yel)"/>
      <polygon points="1818,944 1845,950 1830,1703 1803,1724" fill="#b98d7a"/>
      <g id="clay" stroke="#a08a82" stroke-width="2"></g>
      <g fill="none" stroke="#000" stroke-width="1">
        <path d="M1074 991l709-55 62 14-15 753-61 48-681-202zM1783 936l-14 815M1797 940l-13 799M1801 941l-13 795M1818 944l-15 780"/>
        <path d="M1845 950l-15 753" stroke-width="2"/>
      </g>
      <g clip-path="url(#hole)" stroke="#000" stroke-width="1">
        <rect x="1520" y="1005" width="60" height="75" fill="url(#tube)" stroke="none"/>
        <ellipse cx="1567" cy="1043" rx="27" ry="33" fill="#d9cb91"/>
        <ellipse cx="1573" cy="1043" rx="27" ry="33" fill="#d5c587"/>
        <ellipse cx="1590" cy="1043" rx="26" ry="33" fill="#bd8e78"/>
      </g>
      <ellipse cx="1550" cy="1043" rx="27" ry="33" fill="none" stroke="#000" stroke-width="1"/>
      <circle cx="1366" cy="1600" r="4" fill="#bbb" stroke="#111" stroke-width="1"/>
      <g fill="none" stroke="#fff" stroke-width="8"><path d="M1045 1615l169-57M1041 1637l173-59"/></g>
      <g fill="none" stroke-width="4">
        <path d="M917 1571l122 44M1045 1615l169-57M1035 1394v24" stroke="#14287d"/>
        <path d="M917 1592l124 45 173-59M1041 1637l-6-219" stroke="#000"/>
      </g>
      <g class="axis" fill="#14287d"><text x="1033" y="1381">z</text><text x="904" y="1567">y</text><text x="1225" y="1555">x</text></g>
      <g class="axis"><text x="1036" y="1404">z</text><text x="905" y="1588">y</text><text x="1225" y="1574">x</text></g>
    </svg>
    <i class="snip top"></i><i class="snip bottom"></i><i class="snip left"></i><i class="snip rightside"></i>
  </div>
  <div class="quickbar">
    <div class="nav3"><button aria-label="Zurück"><svg class="i"><use href="#zback"/></svg></button><button class="off2" aria-label="Vor"><svg class="i"><use href="#zfwd"/></svg></button><button aria-label="Vergrößern"><svg class="i"><use href="#zin"/></svg></button></div>
    <div class="nav2"><button aria-label="Orbit"><svg class="i"><use href="#orbit"/></svg></button><button aria-label="Begehen"><svg class="i"><use href="#walk"/></svg></button></div>
    <button class="q gray"><svg class="i ink"><use href="#fit"/></svg><span>keine D...</span><svg class="v"><use href="#right"/></svg></button>
    <button class="q gray"><svg class="i"><use href="#rot2"/></svg><span>keine D...</span><svg class="v"><use href="#right"/></svg></button>
    <button class="q mid"><svg class="i"><use href="#rule2"/></svg><span>1:100</span><svg class="v"><use href="#right"/></svg></button>
    <button class="q"><svg class="i"><use href="#lay"/></svg><span>Individu...</span><svg class="v"><use href="#right"/></svg></button>
    <button class="q"><svg class="i"><use href="#pattern"/></svg><span>Komple...</span><svg class="v"><use href="#right"/></svg></button>
    <button class="q"><svg class="i"><use href="#pen"/></svg><span>04 S/W...</span><svg class="v"><use href="#right"/></svg></button>
    <button class="q"><svg class="i"><use href="#frame"/></svg><span>00 Arb...</span><svg class="v"><use href="#right"/></svg></button>
    <button class="q"><svg class="i"><use href="#swap"/></svg><span>Keine Ü...</span><svg class="v"><use href="#right"/></svg></button>
    <button class="q"><svg class="i"><use href="#reno"/></svg><span>00 Rein...</span><svg class="v"><use href="#right"/></svg></button>
    <button class="q"><svg class="i"><use href="#houses"/></svg><span>Nur Ha...</span><svg class="v"><use href="#right"/></svg></button>
    <button class="q end"><svg class="i"><use href="#cube"/></svg><span>Schatti...</span><svg class="v"><use href="#right"/></svg></button>
  </div>
</section>

<aside class="side">
  <i class="handle wide"></i>
  <div class="modes">
    <button class="m" aria-label="Projekt-Mappe"><svg class="i"><use href="#house"/></svg></button>
    <i class="msep"></i>
    <button class="m" aria-label="Ausschnitt-Mappe"><svg class="i"><use href="#hframe"/></svg></button>
    <button class="m" aria-label="Layoutbuch"><svg class="i"><use href="#sheet"/></svg></button>
    <button class="m on" aria-label="Publisher"><svg class="i"><use href="#stack"/></svg></button>
    <button class="card menu burger" aria-label="Menü"><svg class="i"><use href="#menu"/></svg><svg class="v"><use href="#right"/></svg></button>
  </div>
  <div class="setrow">
    <button class="card upbtn" aria-label="Eine Ebene höher"><svg class="i"><use href="#up"/></svg></button>
    <button class="card setbtn"><svg class="i"><use href="#stack2"/></svg><span>Beispiel BIMx</span><svg class="v"><use href="#right"/></svg></button>
  </div>
  <label class="search"><svg class="i"><use href="#lens"/></svg><input type="text" aria-label="Durchsuchen" placeholder="'Beispiel BIMx' durchsuc"></label>
  <ul class="tree">
    <li><svg class="v tw"><use href="#down"/></svg><svg class="i"><use href="#folder"/></svg>ARCHICAD Beispiel-Vorlage</li>
    <li class="l2"><svg class="v tw"><use href="#down"/></svg><svg class="i"><use href="#folder"/></svg>BA z.B. BAUANTRAG</li>
    <li class="l3"><svg class="i"><use href="#pdf"/></svg>BA.01 Layout</li>
    <li class="l2"><svg class="v tw"><use href="#down"/></svg><svg class="i"><use href="#folder"/></svg>AP z.B. AUSFÜHRUNGSP</li>
    <li class="l3"><svg class="i"><use href="#pdf"/></svg>AP.01 Layout</li>
    <li><svg class="v tw"><use href="#down"/></svg><svg class="i"><use href="#flink"/></svg>3D Darstellungen</li>
    <li class="l2"><svg class="v tw"><use href="#right"/></svg><svg class="i"><use href="#blink"/></svg>3D</li>
    <li class="l2"><svg class="v tw"><use href="#right"/></svg><svg class="i"><use href="#blink"/></svg>3D Weißmodell</li>
  </ul>
  <div class="hbar"><i></i></div>
  <div class="edit"><button aria-label="Neuer Ordner"><svg class="i w44"><use href="#fplus"/></svg></button><button class="x" aria-label="Löschen"><svg class="i"><use href="#del"/></svg></button></div>
  <button class="sec"><i class="tri side-tri"></i>Beschreibungen</button>
  <button class="sec"><i class="tri"></i>Format</button>
  <div class="selwrap"><select aria-label="Format" disabled><option></option></select><svg class="ud" viewBox="0 0 24 28" aria-hidden="true"><path d="M6 10l6-6 6 6M6 18l6 6 6-6"/></svg></div>
  <div class="grow"></div>
  <div class="publish"><button class="card pub">Publizieren</button><button class="card menu" aria-label="Umfang"><svg class="i"><use href="#list"/></svg><svg class="v"><use href="#right"/></svg></button></div>
  <i class="handle wide low"></i>
  <div class="trace">
    <button class="card faint sq" aria-label="Transparentpause"><svg class="i"><use href="#layers"/></svg></button>
    <button class="card faint ref"><svg class="i"><use href="#plan"/></svg><span>0. EG</span><svg class="v"><use href="#right"/></svg></button>
  </div>
  <div class="acts dis"><button aria-label="Tauschen"><svg class="i"><use href="#expand"/></svg></button><b></b><button aria-label="Referenz verschieben"><svg class="i"><use href="#move"/></svg></button><button aria-label="Referenz drehen"><svg class="i"><use href="#rotate"/></svg></button><button aria-label="Zurücksetzen"><svg class="i"><use href="#back"/></svg></button><button aria-label="Neu aufbauen"><svg class="i"><use href="#cycle"/></svg></button></div>
  <div class="sliders">
    <label for="s1">Transparentpause:</label>
    <div class="srow"><button class="card faint col" aria-label="Farbe"><i class="sw"></i><svg class="v"><use href="#right"/></svg></button><div class="rng"><input id="s1" type="range" value="100" disabled><svg viewBox="0 0 260 8" aria-hidden="true"><path d="M2 0v8M32 0v8M56 0v8M80 0v8M104 0v8M130 0v8M156 0v8M180 0v8M204 0v8M228 0v8M258 0v8"/></svg></div><button class="card faint nar" aria-label="Mehr"><svg class="v"><use href="#right"/></svg></button></div>
    <label for="s2">Aktiv:</label>
    <div class="srow"><button class="card faint col" aria-label="Farben"><svg class="pie" viewBox="0 0 28 28"><path d="M14 14V2a12 12 0 0 1 10 18z" fill="#f2a28f"/><path d="M14 14V2A12 12 0 0 0 4 20z" fill="#9fcb9f"/><path d="M14 14L4 20a12 12 0 0 0 20 0z" fill="#9db8f5"/><circle cx="14" cy="14" r="12"/><path d="M14 2v12L4 20M14 14l10 6"/></svg><svg class="v"><use href="#right"/></svg></button><div class="rng"><input id="s2" type="range" value="100" disabled><svg viewBox="0 0 260 8" aria-hidden="true"><path d="M2 0v8M32 0v8M56 0v8M80 0v8M104 0v8M130 0v8M156 0v8M180 0v8M204 0v8M228 0v8M258 0v8"/></svg></div><b class="nar"></b></div>
  </div>
  <div class="foot dis"><button aria-label="Ziehen"><svg class="i"><use href="#hand"/></svg></button><button aria-label="Überlagern"><svg class="i"><use href="#over"/></svg></button><button aria-label="Teiler"><svg class="i"><use href="#splitv"/></svg></button><button aria-label="Füllungen"><svg class="i"><use href="#hatch"/></svg></button></div>
</aside>
</div>

<footer class="status">
  <p>Klicken Sie mit dem Cursor auf ein Element oder ziehen Sie einen Auswahlbereich auf. Drücken Sie für Morphbearbeitung Strg/Ctrl+Umsch, um zwischen Element-/Unterelement-Auswahl zu</p>
  <svg class="i"><use href="#wins"/></svg><i class="bar"></i><a href="#" class="brand">GRAPHISOFT <span>ID</span></a>
</footer>
</div>
<script src="wall.js"></script>
</body>
</html>
```
FILE: styles.css
```css
:root{--ink:#263238;--blue:#3f7ff5;--panel:#ececec;--line:#e4e4e4;--on:#bfbec3}
*{box-sizing:border-box}
html,body{margin:0;height:100%}
body{background:#fff;padding:76px 112px 148px;font:22px/28px Inter,"Liberation Sans",sans-serif;color:#1f1f1f;overflow:hidden}
button{font:inherit;color:inherit;border:0;background:none;padding:0;margin:0;display:flex;align-items:center}
ul{list-style:none;margin:0;padding:0}
p,h1{margin:0}
i{font-style:normal;display:block;flex:none}
.sprite{position:absolute;width:0;height:0}
.i,.v,.p{flex:none;fill:none;stroke:currentColor;stroke-width:2;overflow:visible}
.i{width:40px;height:40px;color:var(--ink)}
.v{width:24px;height:24px}
.p{width:60px;height:40px;color:var(--ink)}
symbol{overflow:visible}
.b{stroke:var(--blue)}
.o{stroke:#f08a34}
.g{stroke:#92989b}
.l{stroke:#c9cacb}
.lb{stroke:#a3bff6}
.ref-stroke{stroke:var(--ref,currentColor)}
.k{fill:currentColor;stroke:none}
.kb{fill:var(--blue);stroke:none}
.kg{fill:#92989b;stroke:none}
.kgs{fill:#92989b}
.w{fill:#fafafa}
.wg{fill:#fafafa;stroke:#92989b}
.f{fill:#ebebeb}
.fb{fill:#e6f0fd}
.slot{fill:#bfbec3}
.slotw{fill:#fff}
.t{fill:currentColor;stroke:none;font-weight:600}
.t15{font-size:16px}
.t12{font-size:13px}
.blue{color:var(--blue)}

.window{height:100%;display:flex;flex-direction:column;border-radius:24px;overflow:hidden;background:var(--panel);box-shadow:0 0 0 1px rgba(0,0,0,.28),0 36px 72px rgba(0,0,0,.4)}
.titlebar{flex:none;height:57px;background:#f3f5f7;border-bottom:2px solid #c6c6c6;display:grid;grid-template-columns:1fr auto 1fr;align-items:center;padding-bottom:2px}
.lights{display:flex;gap:16px;padding-left:16px}
.lights button{width:24px;height:24px;border-radius:50%}
.red{background:#ed6a5e!important}
.yellow{background:#f5bf4f!important}
.green{background:#61c554!important}
h1{font-size:26px;line-height:32px;font-weight:700;color:#454545;display:flex;align-items:center;gap:12px}
.doc{width:24px;height:30px}

.toolbar{flex:none;height:71px;display:flex;align-items:center;gap:6px;padding:0 0 3px 7px;color:#222}
.toolbar>*{flex:none}
.grip{width:2px;height:28px;background:#b3b3b3;margin-right:8px}
.sep{width:16px;height:44px;background:linear-gradient(90deg,transparent 7px,#d0d0d0 7px 9px,transparent 9px)}
.c{width:54px;height:51px;justify-content:center;border-radius:10px}
.d{width:24px;height:51px;justify-content:center;border-radius:8px}
.on{background:var(--on)}
.off .i,.off2 .i{color:#a0a3a5}
.band{flex:none;height:76px;background:#e6e6e6;padding:2px 0}
.second{display:inline-flex;height:72px;background:var(--panel);padding-right:8px}
.info{flex:none;height:123px;border-bottom:2px solid var(--line);padding-top:4px}
.info p{font-size:18px;line-height:26px;padding-left:18px;height:34px}
.inforow{display:flex;align-items:flex-end;gap:4px;padding-left:7px;height:66px}
.grip.tall{height:46px;margin:0 7px 0 0;align-self:center}
.pill{width:80px;height:40px;background:#fff;border-radius:10px;box-shadow:0 1px 3px rgba(0,0,0,.3);justify-content:space-between;padding:0 0 0 7px}
.pill .v{margin-right:-6px}
.pill.pressed{background:var(--on);box-shadow:none;justify-content:center;padding:0}
.pill.big{width:96px;height:56px;padding-left:15px}

.main{flex:1;min-height:0;display:flex}
.palette{flex:none;width:314px;border-right:3px solid #e3e3e3;background:#eeeff1;display:flex;flex-direction:column;color:#000}
.handle{flex:none;height:13px;background:linear-gradient(#a9a9a9,#a9a9a9) center 8px/118px 3px no-repeat,var(--panel)}
.tool{width:100%;height:56px;padding-left:16px;gap:16px;white-space:nowrap}
.palette>ul:first-of-type{padding-bottom:2px}
.tool.sel{height:49px;width:306px;margin:3px 0 4px 4px;padding-left:12px;background:var(--on);border-radius:10px}
.head{flex:none;height:40px;background:#d5d5d5;border-radius:6px;padding-left:11px;gap:15px;color:#222;margin-bottom:1px}
.lower{margin-top:3px}
.last{height:38px;margin:2px 0 2px;padding-top:2px}
.tri{width:18px;height:14px;background:#949a9d;clip-path:polygon(0 0,100% 0,50% 100%)}
.tri.side-tri{width:14px;height:18px;clip-path:polygon(0 0,100% 50%,0 100%);margin-right:4px}
.views{flex:1;min-height:0;display:flex;overflow:hidden}
.views ul{flex:1}
.dim{color:#7b7b7b}
.dim .p{color:#8f9598}
.vbar{width:19px;background:#fafafa;border-left:1px solid #e4e4e4;padding:9px 3px 0}
.vbar i{width:12px;height:247px;border-radius:6px;background:#7d7d7d}

.center{flex:1;min-width:0;display:flex;flex-direction:column}
.tabs{flex:none;height:43px;display:flex;background:#e2e2e2;color:#3c3c3c}
.tabs button{padding-bottom:1px}
.tabgrid{width:66px;padding-left:13px;background:#e6e6e6;border-right:2px solid #adadad}
.tab{width:600px;justify-content:center;gap:4px;background:#e6e6e6;white-space:nowrap}
.active{background:#fff}
.tabfill{flex:1}
.tabmenu{width:99px;padding-left:20px;gap:13px;background:#f8f8f8;color:#222}
.canvas{flex:1;min-height:0;position:relative;background:#fff}
#scene{display:block;width:100%;height:100%}
.axis{font:500 20px Inter,sans-serif}
.snip{position:absolute}
.top,.bottom{width:64px;height:32px;left:1054px;background:repeating-linear-gradient(90deg,#f08a34 0 10px,transparent 10px 14px) 6px 16px/52px 3px no-repeat,#ededed}
.top{top:2px;border-radius:0 0 8px 8px}
.bottom{bottom:2px;border-radius:8px 8px 0 0;background-position:6px 14px,0 0}
.left,.rightside{width:32px;height:64px;top:744px;background:repeating-linear-gradient(#f08a34 0 10px,transparent 10px 14px) 16px 6px/3px 52px no-repeat,#ededed}
.left{left:2px;border-radius:0 8px 8px 0}
.rightside{right:0;border-radius:8px 0 0 8px;background-position:15px 6px,0 0}

.quickbar{flex:none;height:38px;display:flex;background:var(--panel);border-bottom:2px solid var(--line);white-space:nowrap}
.quickbar>*{border-right:2px solid #d2d2d2;padding-top:3px}
.nav3{width:145px;display:flex;gap:6px;padding-left:2px;align-items:center}
.nav2{width:102px;display:flex;gap:6px;padding-left:8px;align-items:center}
.q{width:176px;padding-left:6px}
.q span{flex:1;text-align:left;padding-left:9px}
.q .v{margin-right:3px;margin-left:-8px}
.mid span{padding-left:28px}
.q.end{flex:1;border:0;min-width:0}
.q.end .v{margin-right:-6px}
.gray{color:#b3b3b3}
.gray .v{color:#8f8f8f}
.gray .i{color:#92989b}
.gray .ink{color:var(--ink)}

.side{flex:none;width:371px;border-left:3px solid #e6e6e6;display:flex;flex-direction:column;overflow:hidden}
.wide{background:linear-gradient(#a9a9a9,#a9a9a9) 114px 8px/140px 3px no-repeat}
.modes{flex:none;height:71px;display:flex;align-items:center;padding:0 6px 2px}
.m{width:56px;height:54px;justify-content:center;border-radius:10px;margin-left:2px}
.m+.m{margin-left:5px}
.m:first-child{margin-left:0}
.msep{width:2px;height:40px;background:#cfcfcf;margin:0 10px 0 14px}
.card{background:#fff;border-radius:10px;height:42px;box-shadow:0 1px 3px rgba(0,0,0,.3);flex:none}
.menu{width:66px;margin-left:auto;padding-left:2px;justify-content:space-between}
.menu .v{margin-right:-6px}
.burger{padding-left:10px}
.burger .v{margin-left:-8px}
.setrow{flex:none;display:flex;gap:8px;padding:5px 6px 0}
.upbtn{width:42px}
.setbtn{width:306px;padding-left:7px}
.setbtn span{flex:1;text-align:center;padding-right:56px}
.setbtn .v,.ref .v,.col .v{margin-right:-6px}
.search{flex:none;margin:7px 6px;height:42px;background:#fff;border:1px solid #dcdcdc;border-bottom:2px solid #bdbdbd;display:flex;align-items:center;padding-left:7px}
.search input{flex:1;min-width:0;border:0;outline:0;background:none;font:inherit;padding:0 0 0 7px}
.search input::placeholder{color:#c2c2c2;opacity:1}
.tree{flex:none;height:458px;background:#fff;color:#000;overflow:hidden}
.tree li{height:48px;display:flex;align-items:center;padding-left:1px;white-space:nowrap}
.tree .i{margin:0 7px 0 5px}
.tree .l2{padding-left:29px}
.tree .l3{padding-left:83px}
.tree .tw{width:30px;height:30px;color:#8a8a8a}
.tree .l3 .i{margin-left:8px}
.hbar{flex:none;height:28px;background:#fafafa;border-top:1px solid #e2e2e2;padding:7px 6px}
.hbar i{width:247px;height:16px;border-radius:8px;background:#c1c1c1}
.edit{flex:none;height:70px;display:flex;align-items:center;gap:16px;padding-left:13px}
.i.w44{width:44px}
.edit .x .i{color:#f2a08c}
.sec{flex:none;height:44px;margin:0 4px 8px;background:#d5d5d5;border-radius:6px;padding-left:11px;gap:16px;color:#1d1d1d}
.sec .tri.side-tri{margin:0 2px}
.selwrap{flex:none;margin:1px 6px 0;height:40px;position:relative}
.selwrap select{width:100%;height:40px;appearance:none;border:0;border-radius:10px;background:#f5f5f5;box-shadow:0 1px 3px rgba(0,0,0,.2);opacity:1}
.ud{position:absolute;right:8px;top:6px;width:24px;height:28px;fill:none;stroke:#b0b0b0;stroke-width:3}
.grow{flex:1}
.publish{flex:none;height:61px;border-top:2px solid #d4d4d4;display:flex;padding:7px 6px 0 14px}
.pub{width:274px;justify-content:center}
.low{height:20px}
.trace{flex:none;display:flex;gap:4px;padding:2px 6px 0}
.faint{background:#f5f5f5;height:56px;box-shadow:0 1px 3px rgba(0,0,0,.18);color:#9a9a9a}
.faint .i{color:#8d9396}
.sq{width:56px;justify-content:center}
.ref{width:296px;padding-left:4px}
.ref span{flex:1;text-align:left;padding-left:1px;color:#b9b9b9}
.acts{flex:none;height:78px;display:flex;align-items:center;gap:20px;padding:0 14px 0 13px;border-bottom:2px solid #d4d4d4}
.acts b{flex:1}
.dis{--ref:#9fbaf3}
.dis .i{color:#8d9396}
.sliders{flex:none;height:231px;border-bottom:2px solid #d4d4d4;padding:13px 6px 0 5px;color:#747474}
.sliders label{display:block;height:40px;line-height:30px}
.srow{display:flex;height:56px;margin-bottom:10px;gap:6px;padding-left:1px}
.col{width:56px;padding-left:12px;justify-content:space-between}
.sw{width:24px;height:24px;background:#f29a8b}
.pie{width:28px;height:28px;margin-left:-2px;fill:none;stroke:#8d9396;stroke-width:2}
.rng{flex:1;padding:12px 0 0 2px}
.rng input{display:block;width:100%;height:32px;margin:0;appearance:none;background:linear-gradient(#e1e1e1,#e1e1e1) 0 12px/100% 8px no-repeat;opacity:1}
.rng input::-webkit-slider-thumb{appearance:none;width:16px;height:32px;border-radius:8px;background:#f7f7f7;box-shadow:0 1px 3px rgba(0,0,0,.3)}
.rng svg{display:block;width:100%;height:8px;margin-top:-4px;stroke:#a5a5a5;stroke-width:2}
.nar{width:26px;justify-content:center}
.foot{flex:none;height:72px;display:flex;align-items:center;justify-content:center;gap:21px;padding:10px 0 0 2px;border-bottom:2px solid var(--line)}

.status{flex:none;height:48px;display:flex;align-items:center;padding:0 24px 8px 14px;white-space:nowrap}
.status p{flex:1}
.bar{width:2px;height:30px;background:#8e9396;margin:0 22px 0 16px}
.brand{font:26px/32px Lato,sans-serif;color:var(--ink);text-decoration:none}
.brand span{font-weight:300}
```
FILE: wall.js
```js
// Projects a unit square onto a four-sided face and lays a running brick bond on it.
function projector(p) {
  const [[x0, y0], [x1, y1], [x2, y2], [x3, y3]] = p;
  const dx1 = x1 - x2, dx2 = x3 - x2, sx = x0 - x1 + x2 - x3;
  const dy1 = y1 - y2, dy2 = y3 - y2, sy = y0 - y1 + y2 - y3;
  const det = dx1 * dy2 - dx2 * dy1;
  const g = (sx * dy2 - dx2 * sy) / det, h = (dx1 * sy - sx * dy1) / det;
  const a = x1 - x0 + g * x1, b = x3 - x0 + h * x3;
  const d = y1 - y0 + g * y1, e = y3 - y0 + h * y3;
  return (u, v) => {
    const w = g * u + h * v + 1;
    return ((a * u + b * v + x0) / w).toFixed(1) + ',' + ((d * u + e * v + y0) / w).toFixed(1);
  };
}

// Small hash of the course and brick number, so that the shades stay the same on every load.
function shade(r, c) {
  const n = Math.abs(Math.sin(r * 127.1 + c * 311.7) * 43758.5453) % 1;
  return Math.round(n > 0.93 ? 174 : 156 + n * 12);
}

function bricks(id, face, cols, rows, gapU, gapV) {
  const at = projector(face);
  let out = '';
  for (let r = 0; r < rows; r++) {
    const shift = r % 2 ? -0.5 : 0;
    const v0 = r / rows + gapV, v1 = (r + 1) / rows;
    for (let c = shift; c < cols; c++) {
      const u0 = Math.max(0, c / cols + gapU), u1 = Math.min(1, (c + 1) / cols);
      if (u1 <= u0) continue;
      const s = shade(r, c);
      out += `<polygon fill="rgb(${s},${s},${s})" points="${at(u0, v0)} ${at(u1, v0)} ${at(u1, v1)} ${at(u0, v1)}"/>`;
    }
  }
  document.getElementById(id).innerHTML = out;
}

bricks('front', [[1074, 991], [1783, 936], [1769, 1751], [1088, 1549]], 15.65, 40, 0.0025, 0.0034);
bricks('edge', [[1783, 936], [1797, 940], [1784, 1739], [1769, 1751]], 1, 40, 0, 0.0034);

const clay = projector([[1818, 944], [1845, 950], [1830, 1703], [1803, 1724]]);
document.getElementById('clay').innerHTML = Array.from({ length: 11 }, (_, k) =>
  `<polyline points="${clay(0, (k + 1) / 12)} ${clay(1, (k + 1) / 12)}"/>`).join('');
```
